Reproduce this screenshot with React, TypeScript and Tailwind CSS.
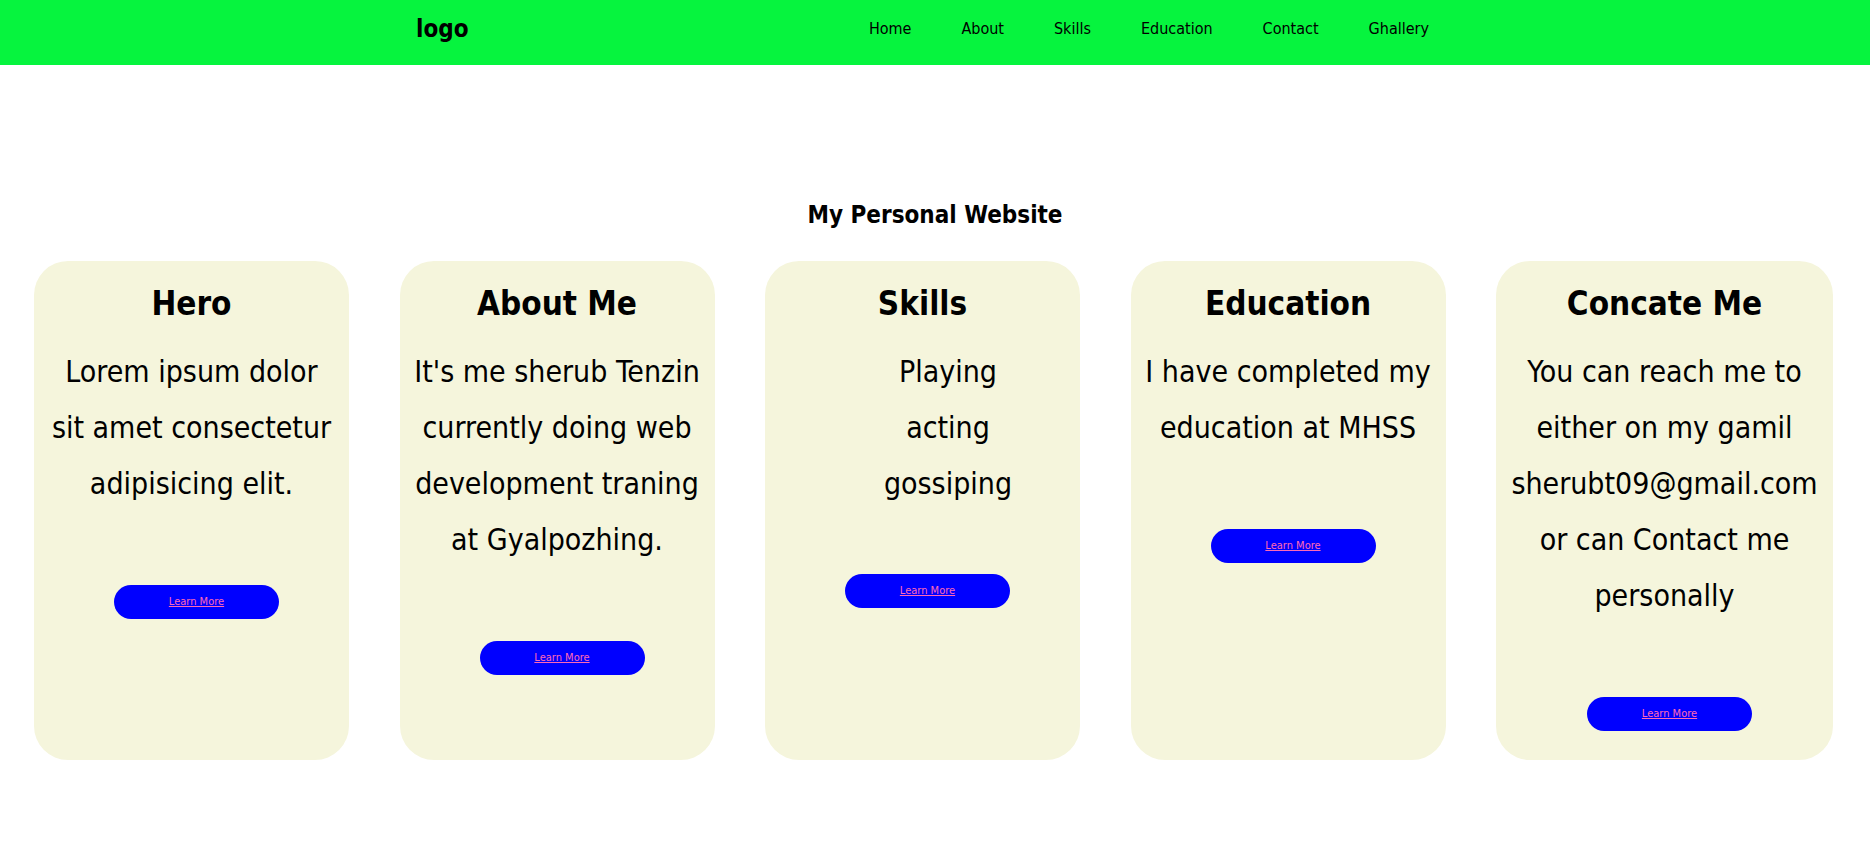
const navLinks = ["Home", "About", "Skills", "Education", "Contact", "Ghallery"];

interface CardProps {
  title: string;
  lines: string[];
  list?: boolean;
  wide?: boolean;
}

const LearnMore = ({ className = "" }: { className?: string }) => (
  <a
    href="#"
    className={`ml-[10px] flex h-[34px] w-[165px] shrink-0 items-center justify-center rounded-full bg-[#0000ff] text-[11px] text-[#ff69b4] underline ${className}`}
  >
    Learn More
  </a>
);

const Card = ({ title, lines, list, wide }: CardProps) => (
  <div
    className={`flex h-[499px] flex-col items-center rounded-[34px] bg-[#f5f5dc] pt-[15px] ${wide ? "w-[337px]" : "w-[315px]"}`}
  >
    <h2 className="text-[33px] font-bold leading-[56px] text-black">{title}</h2>
    {list ? (
      <ul className="mt-[12px] pl-[51px] text-center text-[30px] leading-[56px]">
        {lines.map((l) => (
          <li key={l} className="whitespace-nowrap">{l}</li>
        ))}
      </ul>
    ) : (
      <p className="mt-[12px] text-center text-[30px] leading-[56px]">
        {lines.map((l) => (
          <span key={l} className="block whitespace-nowrap">{l}</span>
        ))}
      </p>
    )}
    <LearnMore className={list ? "mt-[62px]" : "mt-[73px]"} />
  </div>
);

export default function App() {
  return (
    <div className="min-h-screen bg-white font-['DejaVu_Sans_Condensed','Liberation_Sans',sans-serif] text-black">
      <nav className="h-[65px] bg-[#06f43e]">
        <div className="mx-auto flex h-full w-[1038px] items-center justify-between pb-[8px]">
          <h1 className="text-[24px] font-bold leading-none">logo</h1>
          <ul className="flex">
            {navLinks.map((link) => (
              <li key={link} className="px-[25px] text-[16px]">
                <a href="#">{link}</a>
              </li>
            ))}
          </ul>
        </div>
      </nav>

      <h2 className="mt-[130px] text-center text-[24px] font-bold leading-[40px]">My Personal Website</h2>

      <section className="mt-[26px] flex gap-[50.5px] pl-[34px]">
        <Card title="Hero" lines={["Lorem ipsum dolor", "sit amet consectetur", "adipisicing elit."]} />
        <Card
          title="About Me"
          lines={["It's me sherub Tenzin", "currently doing web", "development traning", "at Gyalpozhing."]}
        />
        <Card title="Skills" lines={["Playing", "acting", "gossiping"]} list />
        <Card title="Education" lines={["I have completed my", "education at MHSS"]} />
        <Card
          title="Concate Me"
          lines={[
            "You can reach me to",
            "either on my gamil",
            "sherubt09@gmail.com",
            "or can Contact me",
            "personally",
          ]}
          wide
        />
      </section>
    </div>
  );
}
